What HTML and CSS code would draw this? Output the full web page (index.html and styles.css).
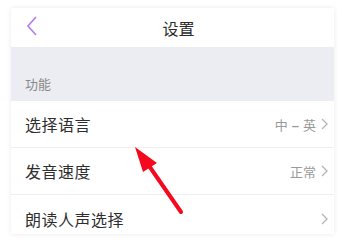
FILE: index.html
```html
<!DOCTYPE html>
<html>
<head>
<meta charset="utf-8">
<link rel="stylesheet" href="styles.css">
</head>
<body>
<div class="card">
  <div class="header">
    <svg class="back" width="12" height="20" viewBox="0 0 12 20"><path d="M10 1 L2 10 L10 19" fill="none" stroke="#b27cf0" stroke-width="1.6"/></svg>
    <div class="title">设置</div>
  </div>
  <div class="section">功能</div>
  <div class="row">
    <span class="label">选择语言</span>
    <span class="value">中<span class="dash">–</span>英</span>
    <svg class="chev" width="7" height="12" viewBox="0 0 7 12"><path d="M1 1 L6 6 L1 11" fill="none" stroke="#b5b5b5" stroke-width="1.3"/></svg>
  </div>
  <div class="row">
    <span class="label">发音速度</span>
    <span class="value">正常</span>
    <svg class="chev" width="7" height="12" viewBox="0 0 7 12"><path d="M1 1 L6 6 L1 11" fill="none" stroke="#b5b5b5" stroke-width="1.3"/></svg>
  </div>
  <div class="row last">
    <span class="label">朗读人声选择</span>
    <span class="value"></span>
    <svg class="chev" width="7" height="12" viewBox="0 0 7 12"><path d="M1 1 L6 6 L1 11" fill="none" stroke="#b5b5b5" stroke-width="1.3"/></svg>
  </div>
</div>
<svg class="arrow" width="342" height="243" viewBox="0 0 342 243">
  <line x1="181" y1="212" x2="145" y2="160" stroke="#f5091f" stroke-width="4" stroke-linecap="round"/>
  <polygon points="135,147 157,163 143,172" fill="#f5091f"/>
</svg>
</body>
</html>
```
FILE: styles.css
```css
* { box-sizing: border-box; }
body {
  margin: 0;
  background: #ffffff;
  font-family: "Noto Sans CJK SC", "Noto Sans", sans-serif;
  width: 342px;
  height: 243px;
  overflow: hidden;
  position: relative;
}
.card {
  margin: 8px 0 0 11px;
  width: 323px;
  height: 226px;
  background: #fff;
  box-shadow: 0 0 5px rgba(0,0,0,0.09);
  overflow: hidden;
}
.header {
  height: 39px;
  display: flex;
  align-items: center;
  justify-content: center;
  position: relative;
}
.back {
  position: absolute;
  left: 15px;
  top: 8px;
}
.title {
  font-size: 16px;
  color: #2b2b2b;
  margin-left: 12px;
  line-height: 1;
}
.section {
  height: 54px;
  background: #ecedf2;
  color: #8a8a8a;
  font-size: 13px;
  padding: 28px 0 0 14px;
  line-height: 18px;
}
.row {
  height: 47px;
  display: flex;
  align-items: center;
  padding: 0 6px 0 14px;
  border-bottom: 1px solid #efefef;
}
.row.last { border-bottom: none; }
.label {
  flex: 1;
  font-size: 16px;
  color: #2e2e2e;
  letter-spacing: 0.5px;
}
.value {
  font-size: 13px;
  color: #999;
  margin-right: 5px;
}
.dash {
  font-family: "Liberation Sans", sans-serif;
  font-weight: bold;
  margin: 0 4px;
}
.chev { display: block; }
.arrow {
  position: absolute;
  left: 0;
  top: 0;
}
```
